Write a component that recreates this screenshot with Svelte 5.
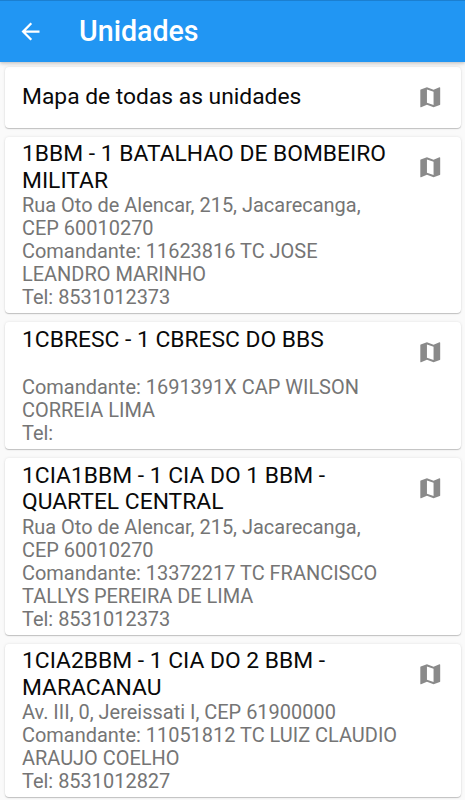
<script>
	const units = [
		{
			name: '1BBM - 1 BATALHAO DE BOMBEIRO\nMILITAR',
			address: 'Rua Oto de Alencar, 215, Jacarecanga,\nCEP 60010270',
			commander: '11623816 TC JOSE\nLEANDRO MARINHO',
			phone: '8531012373'
		},
		{
			name: '1CBRESC - 1 CBRESC DO BBS',
			address: '',
			commander: '1691391X CAP WILSON\nCORREIA LIMA',
			phone: ''
		},
		{
			name: '1CIA1BBM - 1 CIA DO 1 BBM -\nQUARTEL CENTRAL',
			address: 'Rua Oto de Alencar, 215, Jacarecanga,\nCEP 60010270',
			commander: '13372217 TC FRANCISCO\nTALLYS PEREIRA DE LIMA',
			phone: '8531012373'
		},
		{
			name: '1CIA2BBM - 1 CIA DO 2 BBM -\nMARACANAU',
			address: 'Av. III, 0, Jereissati I, CEP 61900000',
			commander: '11051812 TC LUIZ CLAUDIO\nARAUJO COELHO',
			phone: '8531012827'
		}
	];
</script>

{#snippet mapIcon()}
	<button class="map" aria-label="Mapa">
		<svg viewBox="0 0 24 24">
			<path
				d="M20.5 3l-.16.03L15 5.1 9 3 3.36 4.9c-.21.07-.36.25-.36.48V20.5c0 .28.22.5.5.5l.16-.03L9 18.9l6 2.1 5.64-1.9c.21-.07.36-.25.36-.48V3.5c0-.28-.22-.5-.5-.5zM15 19l-6-2.11V5l6 2.11V19z"
			/>
		</svg>
	</button>
{/snippet}

<div class="screen">
	<header>
		<button class="back" aria-label="Voltar">
			<svg viewBox="0 0 24 24">
				<path d="M20 11H7.83l5.59-5.59L12 4l-8 8 8 8 1.41-1.41L7.83 13H20v-2z" />
			</svg>
		</button>
		<h1>Unidades</h1>
	</header>

	<main>
		<section class="card all">
			<h2>Mapa de todas as unidades</h2>
			{@render mapIcon()}
		</section>

		{#each units as unit}
			<section class="card">
				<div class="text">
					<h2>{unit.name}</h2>
					<p class="address">{unit.address}</p>
					<p>Comandante: {unit.commander}</p>
					<p>Tel: {unit.phone}</p>
				</div>
				{@render mapIcon()}
			</section>
		{/each}
	</main>
</div>

<style>
	:global(body) {
		margin: 0;
		background: #fafafa;
	}

	.screen {
		height: 800px;
		overflow: hidden;
		font-family: Roboto, sans-serif;
		background: #fafafa;
	}

	header {
		position: relative;
		display: flex;
		align-items: center;
		box-sizing: border-box;
		height: 62px;
		padding-left: 17px;
		border-top: 1px solid #1b7fd0;
		background: #2196f3;
		box-shadow:
			0 1px 3px rgba(0, 0, 0, 0.16),
			0 2px 5px rgba(0, 0, 0, 0.1);
	}

	button {
		padding: 0;
		border: 0;
		background: none;
	}

	svg {
		display: block;
		width: 100%;
		height: 100%;
	}

	.back {
		width: 27px;
		height: 27px;
		fill: #fff;
	}

	h1 {
		margin: 0 0 0 35px;
		color: #fff;
		font-size: 28.6px;
		font-weight: 500;
		line-height: 33px;
	}

	main {
		display: flex;
		flex-direction: column;
		gap: 9px;
		padding: 5px 4.5px 0;
	}

	.card {
		display: flex;
		justify-content: space-between;
		align-items: flex-start;
		padding: 4.6px 17.5px 4px;
		border-radius: 4px;
		background: #fff;
		box-shadow:
			0 1px 1px rgba(0, 0, 0, 0.2),
			0 0 3px rgba(0, 0, 0, 0.1);
	}

	.all {
		align-items: center;
		height: 52.3px;
		padding-top: 3.8px;
		padding-bottom: 4.8px;
	}

	h2,
	p {
		margin: 0;
		font-weight: 400;
		white-space: pre;
	}

	h2 {
		color: #090909;
		font-size: 22.82px;
		line-height: 26.4px;
	}

	p {
		color: #757575;
		font-size: 19.97px;
		line-height: 23px;
	}

	.address {
		min-height: 23px;
	}

	.map {
		flex: none;
		width: 26.5px;
		height: 26.5px;
		margin-top: 12.5px;
		fill: #8a8a8a;
	}

	.all .map {
		margin-top: 0;
	}
</style>
